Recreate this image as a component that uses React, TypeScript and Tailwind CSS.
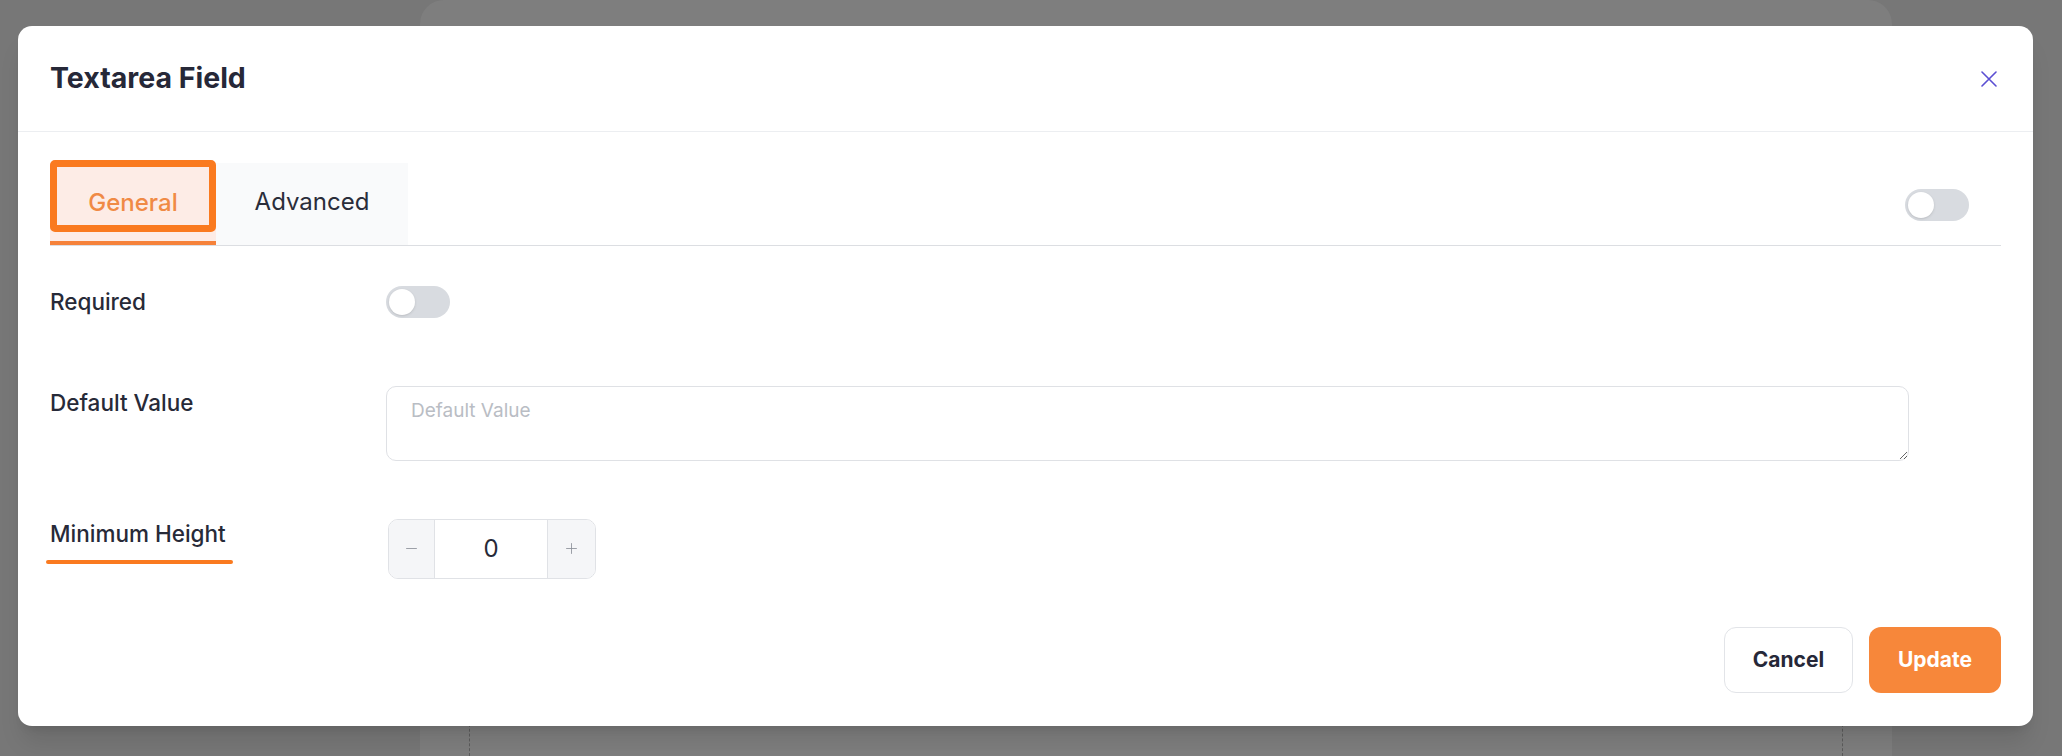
import { useState } from "react";
import { Minus, Plus } from "lucide-react";

const Toggle = ({ on, onClick }: { on: boolean; onClick: () => void }) => (
  <button
    type="button"
    onClick={onClick}
    className={`relative w-[64px] h-[32px] rounded-full transition-colors ${
      on ? "bg-[#f7873a]" : "bg-[#d8dbe0]"
    }`}
  >
    <span
      className={`absolute top-[3px] left-[3px] w-[26px] h-[26px] rounded-full bg-white shadow-sm transition-transform ${
        on ? "translate-x-[32px]" : "translate-x-0"
      }`}
    />
  </button>
);

const App = () => {
  const [tab, setTab] = useState("general");
  const [required, setRequired] = useState(false);
  const [extra, setExtra] = useState(false);
  const [defaultValue, setDefaultValue] = useState("");
  const [minHeight, setMinHeight] = useState(0);

  return (
    <div className="relative w-full h-[756px] overflow-hidden bg-[#777777] font-['Inter',sans-serif]">
      {/* page behind the overlay */}
      <div className="flex h-full pl-[420px]">
        <div className="w-[1472px] h-full rounded-t-[24px] bg-[#7e7e7e] pt-[690px] px-[49px]">
          <div className="h-full border-x border-dashed border-[#5c5c5c]" />
        </div>
      </div>

      {/* modal */}
      <div className="absolute left-[18px] top-[26px] w-[2015px] h-[700px] rounded-[14px] bg-white shadow-xl flex flex-col">
        <div className="h-[106px] flex items-center justify-between pl-8 pr-[36px] border-b border-[#eceef1]">
          <h2 className="text-[28.5px] font-bold text-[#262838]">
            Textarea Field
          </h2>
          <button type="button" className="text-[#5b4fd3]">
            <svg width="16" height="16" viewBox="0 0 16 16" fill="none">
              <path
                d="M1 1L15 15M15 1L1 15"
                stroke="currentColor"
                strokeWidth="1.6"
                strokeLinecap="round"
              />
            </svg>
          </button>
        </div>

        <div className="flex-1 flex flex-col px-8 pt-[28px] pb-[33px]">
          {/* tabs */}
          <div className="flex items-center justify-between border-b border-[#dcdee2] pr-[32px]">
            <div className="flex h-[85px]">
              <button
                type="button"
                onClick={() => setTab("general")}
                className={`relative w-[166px] h-full pt-[4px] rounded-t-[6px] text-[24px] font-medium border-b-4 ${
                  tab === "general"
                    ? "bg-[#fdece6] text-[#f08a45] border-[#f6823a]"
                    : "bg-[#f9fafb] text-[#2a2d3a] border-transparent"
                }`}
              >
                General
                {tab === "general" && (
                  <span className="absolute left-0 top-0 w-[166px] h-[72px] rounded-[5px] border-[7px] border-[#fa7a1f]" />
                )}
              </button>
              <button
                type="button"
                onClick={() => setTab("advanced")}
                className={`w-[192px] h-[82px] mt-[3px] text-[24px] border-b-4 ${
                  tab === "advanced"
                    ? "bg-[#fdece6] text-[#f08a45] border-[#f6823a]"
                    : "bg-[#f9fafb] text-[#2a2d3a] border-transparent"
                }`}
              >
                Advanced
              </button>
            </div>
            <div className="mt-[10px]">
              <Toggle on={extra} onClick={() => setExtra(!extra)} />
            </div>
          </div>

          {/* required */}
          <div className="flex items-center mt-[39px]">
            <div className="w-[336px] text-[22.5px] font-medium text-[#272a38]">
              Required
            </div>
            <Toggle on={required} onClick={() => setRequired(!required)} />
          </div>

          {/* default value */}
          <div className="flex items-start mt-[67px]">
            <div className="w-[336px] text-[22.5px] font-medium text-[#272a38]">
              Default Value
            </div>
            <textarea
              value={defaultValue}
              onChange={(e) => setDefaultValue(e.target.value)}
              placeholder="Default Value"
              className="w-[1523px] h-[75px] rounded-[10px] border border-[#dfe1e5] px-[24px] py-[10px] text-[19px] text-[#272a38] placeholder:text-[#b9bdc4] outline-none"
            />
          </div>

          {/* minimum height */}
          <div className="flex items-start mt-[55px]">
            <div className="w-[336px] pt-[1px]">
              <span className="relative inline-block text-[22.5px] font-medium text-[#272a38]">
                Minimum Height
                <span className="absolute left-[-4px] right-[-7px] top-[43px] h-[4px] rounded-full bg-[#fa7a1f]" />
              </span>
            </div>
            <div className="flex ml-[2px] mt-[3px] w-[208px] h-[60px] rounded-[10px] border border-[#e0e2e6] overflow-hidden">
              <button
                type="button"
                onClick={() => setMinHeight(Math.max(0, minHeight - 1))}
                className="w-[46px] flex items-center justify-center bg-[#f5f6f8] border-r border-[#e0e2e6] text-[#8b9099]"
              >
                <Minus size={17} strokeWidth={1.2} />
              </button>
              <div className="flex-1 flex items-center justify-center text-[24px] text-[#272a38]">
                {minHeight}
              </div>
              <button
                type="button"
                onClick={() => setMinHeight(minHeight + 1)}
                className="w-[48px] flex items-center justify-center bg-[#f5f6f8] border-l border-[#e0e2e6] text-[#8b9099]"
              >
                <Plus size={17} strokeWidth={1.2} />
              </button>
            </div>
          </div>

          {/* footer */}
          <div className="mt-auto flex justify-end gap-4">
            <button
              type="button"
              className="w-[129px] h-[66px] rounded-[12px] border border-[#e2e4e8] bg-white text-[21px] font-bold text-[#262838]"
            >
              Cancel
            </button>
            <button
              type="button"
              className="w-[132px] h-[66px] rounded-[12px] bg-[#f7873a] text-[21px] font-bold text-white"
            >
              Update
            </button>
          </div>
        </div>
      </div>
    </div>
  );
};

export default App;
